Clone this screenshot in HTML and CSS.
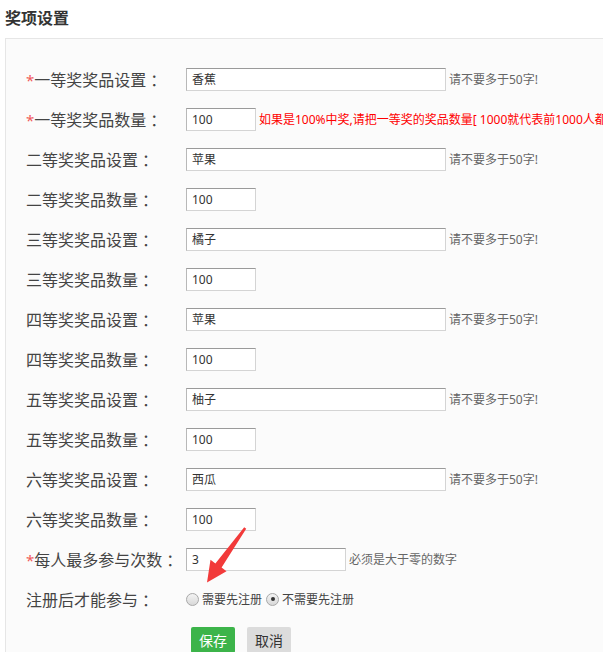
FILE: index.html
```html
<!DOCTYPE html>
<html lang="zh-CN">
<head>
<meta charset="utf-8">
<title>奖项设置</title>
<link rel="stylesheet" href="styles.css">
</head>
<body>
<div class="page">
  <h2 class="title">奖项设置</h2>
  <div class="panel">
    <div class="row"><label class="lbl"><span class="req">*</span>一等奖奖品设置<span class="colon">：</span></label><input class="ipt wide" type="text" value="香蕉"><span class="hint">请不要多于50字!</span></div>
    <div class="row"><label class="lbl"><span class="req">*</span>一等奖奖品数量<span class="colon">：</span></label><input class="ipt short" type="text" value="100"><span class="hint red">如果是100%中奖,请把一等奖的奖品数量[ 1000就代表前1000人都中奖 ]</span></div>
    <div class="row"><label class="lbl">二等奖奖品设置<span class="colon">：</span></label><input class="ipt wide" type="text" value="苹果"><span class="hint">请不要多于50字!</span></div>
    <div class="row"><label class="lbl">二等奖奖品数量<span class="colon">：</span></label><input class="ipt short" type="text" value="100"></div>
    <div class="row"><label class="lbl">三等奖奖品设置<span class="colon">：</span></label><input class="ipt wide" type="text" value="橘子"><span class="hint">请不要多于50字!</span></div>
    <div class="row"><label class="lbl">三等奖奖品数量<span class="colon">：</span></label><input class="ipt short" type="text" value="100"></div>
    <div class="row"><label class="lbl">四等奖奖品设置<span class="colon">：</span></label><input class="ipt wide" type="text" value="苹果"><span class="hint">请不要多于50字!</span></div>
    <div class="row"><label class="lbl">四等奖奖品数量<span class="colon">：</span></label><input class="ipt short" type="text" value="100"></div>
    <div class="row"><label class="lbl">五等奖奖品设置<span class="colon">：</span></label><input class="ipt wide" type="text" value="柚子"><span class="hint">请不要多于50字!</span></div>
    <div class="row"><label class="lbl">五等奖奖品数量<span class="colon">：</span></label><input class="ipt short" type="text" value="100"></div>
    <div class="row"><label class="lbl">六等奖奖品设置<span class="colon">：</span></label><input class="ipt wide" type="text" value="西瓜"><span class="hint">请不要多于50字!</span></div>
    <div class="row"><label class="lbl">六等奖奖品数量<span class="colon">：</span></label><input class="ipt short" type="text" value="100"></div>
    <div class="row"><label class="lbl"><span class="req">*</span>每人最多参与次数<span class="colon">：</span></label><input class="ipt mid" type="text" value="3"><span class="hint">必须是大于零的数字</span></div>
    <div class="row"><label class="lbl">注册后才能参与<span class="colon">：</span></label>
      <span class="radios">
        <label class="opt"><span class="radio"></span>需要先注册</label>
        <label class="opt"><span class="radio on"></span>不需要先注册</label>
      </span>
    </div>
    <div class="actions">
      <button class="btn save" type="button">保存</button>
      <button class="btn cancel" type="button">取消</button>
    </div>
  </div>
  <svg class="arrow" width="603" height="652" viewBox="0 0 603 652" aria-hidden="true">
    <polygon points="244.2,527.2 246.2,528.8 221.6,567.4 226.5,571.3 207,582.5 210.5,559.8 215.4,563.4" fill="#f23a3a"/>
  </svg>
</div>
</body>
</html>
```

FILE: styles.css
```css
html, body {
  margin: 0;
  padding: 0;
  background: #fff;
  overflow: hidden;
}
.page {
  position: relative;
  width: 603px;
  height: 652px;
  font-family: "Noto Sans", "Noto Sans CJK SC", sans-serif;
  color: #444;
}
.title {
  margin: 0;
  height: 38px;
  padding-left: 5px;
  font-size: 16px;
  font-weight: bold;
  line-height: 34px;
  color: #333;
  font-family: "Noto Sans CJK SC", sans-serif;
}
.panel {
  margin-left: 5px;
  width: 720px;
  border: 1px solid #e6e6e6;
  background: #fbfbfb;
  padding: 20px 0 20px 20px;
  box-sizing: border-box;
}
.row {
  display: flex;
  align-items: center;
  height: 40px;
  white-space: nowrap;
}
.lbl {
  width: 160px;
  flex: none;
  font-size: 16px;
  color: #444;
  font-family: "Noto Sans CJK SC", sans-serif;
  text-spacing-trim: space-all;
}
.colon {
  font-family: "Noto Sans CJK TC", sans-serif;
  margin-left: 4px;
}
.req {
  color: #f15a5a;
  font-family: "Noto Sans", sans-serif;
  font-size: 15px;
}
.ipt {
  box-sizing: border-box;
  height: 23px;
  border: 1px solid #d4d4d4;
  border-top-color: #9a9a9a;
  border-left-color: #b8b8b8;
  background: #fff;
  padding: 0 5px;
  font-size: 12px;
  color: #333;
  font-family: "Noto Sans", "Noto Sans CJK SC", sans-serif;
  outline: none;
  flex: none;
}
.wide { width: 260px; }
.short { width: 70px; }
.mid { width: 160px; }
.hint {
  margin-left: 3px;
  font-size: 12px;
  color: #666;
}
.hint.red { color: #f00; }
.radios {
  display: flex;
  align-items: center;
  gap: 4px;
}
.opt {
  display: flex;
  align-items: center;
  font-size: 12px;
  color: #444;
}
.radio {
  width: 13px;
  height: 13px;
  box-sizing: border-box;
  border-radius: 50%;
  border: 1px solid #a8a8a8;
  background: linear-gradient(#f4f4f4, #d8d8d8);
  margin-right: 3px;
  position: relative;
}
.radio.on::after {
  content: "";
  position: absolute;
  left: 3.5px;
  top: 3.5px;
  width: 4px;
  height: 4px;
  border-radius: 50%;
  background: #333;
}
.actions {
  display: flex;
  gap: 12px;
  padding-left: 165px;
  margin-top: 8px;
}
.btn {
  width: 44px;
  height: 26px;
  border: none;
  border-radius: 2px;
  font-size: 14px;
  font-family: "Noto Sans CJK SC", sans-serif;
  padding: 0;
}
.save {
  background: #3cb44a;
  color: #fff;
}
.cancel {
  background: #dcdcdc;
  color: #333;
}
.arrow {
  position: absolute;
  left: 0;
  top: 0;
  pointer-events: none;
}
```
